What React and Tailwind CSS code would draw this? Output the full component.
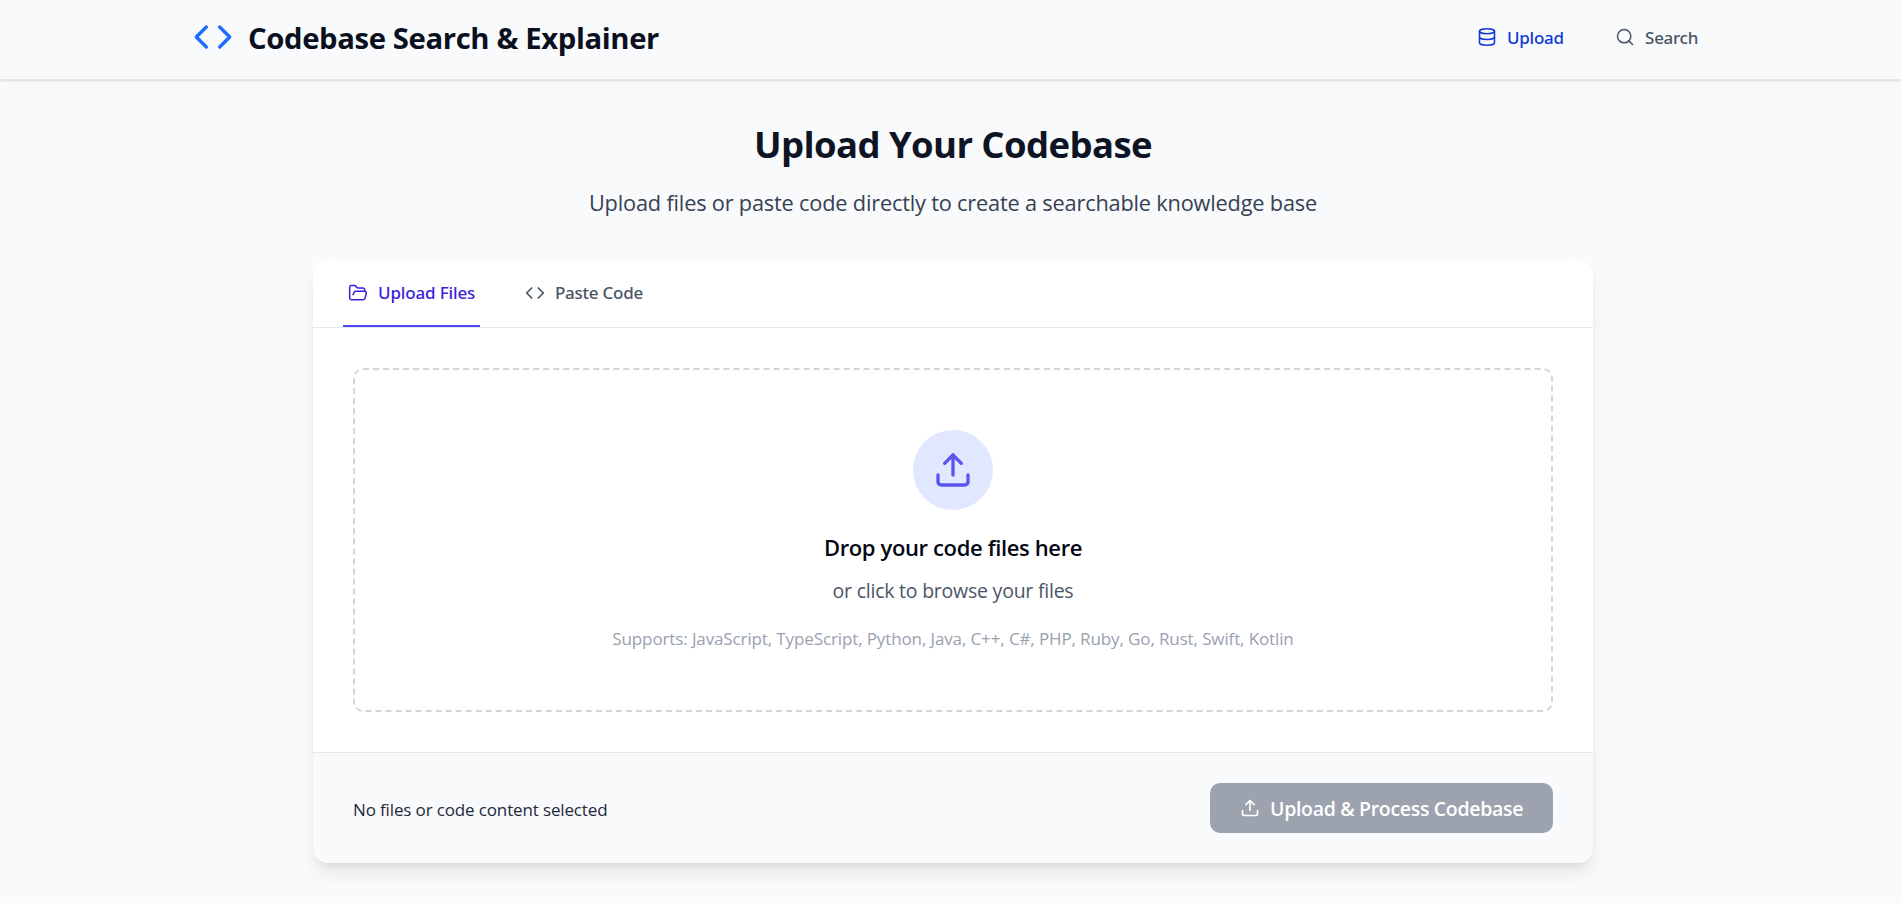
import { Code, Database, Search, FolderOpen, Upload } from "lucide-react";

function Header() {
  return (
    <header className="h-[80px] border-b border-gray-200 bg-gray-50 pl-[5px] shadow-sm">
      <div className="mx-auto flex h-full max-w-[1600px] items-center justify-between px-10 pb-[5px]">
        <div className="flex items-center gap-[15px]">
          <Code size={40} className="text-[#1a6dff]" />
          <h1 className="whitespace-nowrap pt-[3px] text-[29.25px] leading-[37px] font-bold tracking-[-0.37px] text-[#0b1020]">Codebase Search &amp; Explainer</h1>
        </div>
        <nav className="flex items-center gap-5 pr-[15px] font-['Noto_Sans','Open_Sans',sans-serif] text-[17px] leading-[25px] font-medium">
          <a className="flex w-[118px] items-center gap-[10px] whitespace-nowrap tracking-[-0.3px] text-[#1039d8]">
            <Database size={20} strokeWidth={1.85} />
            Upload
          </a>
          <a className="flex items-center gap-[10px] whitespace-nowrap tracking-[-0.3px] text-gray-600">
            <Search size={20} strokeWidth={1.85} />
            Search
          </a>
        </nav>
      </div>
    </header>
  );
}

export default function App() {
  return (
    <div className="h-[903px] overflow-hidden bg-gray-50 font-['Open_Sans',sans-serif]">
      <Header />
      <main className="flex flex-col items-center pt-[42px] pl-[5px]">
        <h2 className="whitespace-nowrap text-[36.5px] leading-[45px] font-bold tracking-[-0.6px] text-[#0e1424]">Upload Your Codebase</h2>
        <p className="mt-[18px] whitespace-nowrap text-[21.75px] leading-[35px] tracking-[-0.19px] text-gray-700">
          Upload files or paste code directly to create a searchable knowledge base
        </p>
        <section className="mt-[40px] w-[1280px] overflow-hidden rounded-[15px] bg-white shadow-[0_12px_19px_-4px_rgb(0_0_0/0.1),0_5px_8px_-5px_rgb(0_0_0/0.1)]">
          <div className="flex h-[68px] items-stretch gap-10 border-b border-gray-200 px-[30px] font-['Noto_Sans','Open_Sans',sans-serif] text-[17px] font-medium">
            <button className="flex w-[137px] items-center gap-[10px] border-b-2 border-[#4f46f5] px-[5px] whitespace-nowrap tracking-[-0.15px] text-[#3a22dc]">
              <FolderOpen size={20} strokeWidth={1.85} className="shrink-0" />
              <span className="pt-px">Upload Files</span>
            </button>
            <button className="flex items-center gap-[10px] border-b-2 border-transparent px-[5px] whitespace-nowrap tracking-[-0.25px] text-gray-600">
              <Code size={20} />
              <span className="pt-px">Paste Code</span>
            </button>
          </div>
          <div className="p-10">
            <div className="flex h-[344px] flex-col items-center rounded-[10px] border-2 border-dashed border-gray-300 pt-[60px]">
              <div className="flex size-20 items-center justify-center rounded-full bg-indigo-100 text-[#5854f0]">
                <Upload size={40} />
              </div>
              <h3 className="mt-[20px] whitespace-nowrap text-[22px] leading-[35px] font-semibold tracking-[-0.37px] text-gray-950">Drop your code files here</h3>
              <p className="mt-[11px] whitespace-nowrap text-[19.5px] leading-[30px] tracking-[-0.23px] text-gray-600">or click to browse your files</p>
              <p className="mt-[20px] whitespace-nowrap text-[17px] leading-[25px] tracking-[-0.12px] text-gray-400">
                Supports: JavaScript, TypeScript, Python, Java, C++, C#, PHP, Ruby, Go, Rust, Swift, Kotlin
              </p>
            </div>
          </div>
          <div className="flex h-[111px] items-center justify-between border-t border-gray-200 bg-gray-50 px-10">
            <span className="whitespace-nowrap pt-[2px] text-[17px] leading-[25px] tracking-[-0.14px] text-gray-800">No files or code content selected</span>
            <button className="flex h-[50px] w-[343px] items-center gap-[10px] rounded-[10px] bg-[#9ca3af] pl-[30px] text-[19.5px] font-semibold whitespace-nowrap tracking-[-0.32px] text-white">
              <Upload size={20} className="shrink-0" />
              <span className="pt-[2px]">Upload &amp; Process Codebase</span>
            </button>
          </div>
        </section>
      </main>
    </div>
  );
}
